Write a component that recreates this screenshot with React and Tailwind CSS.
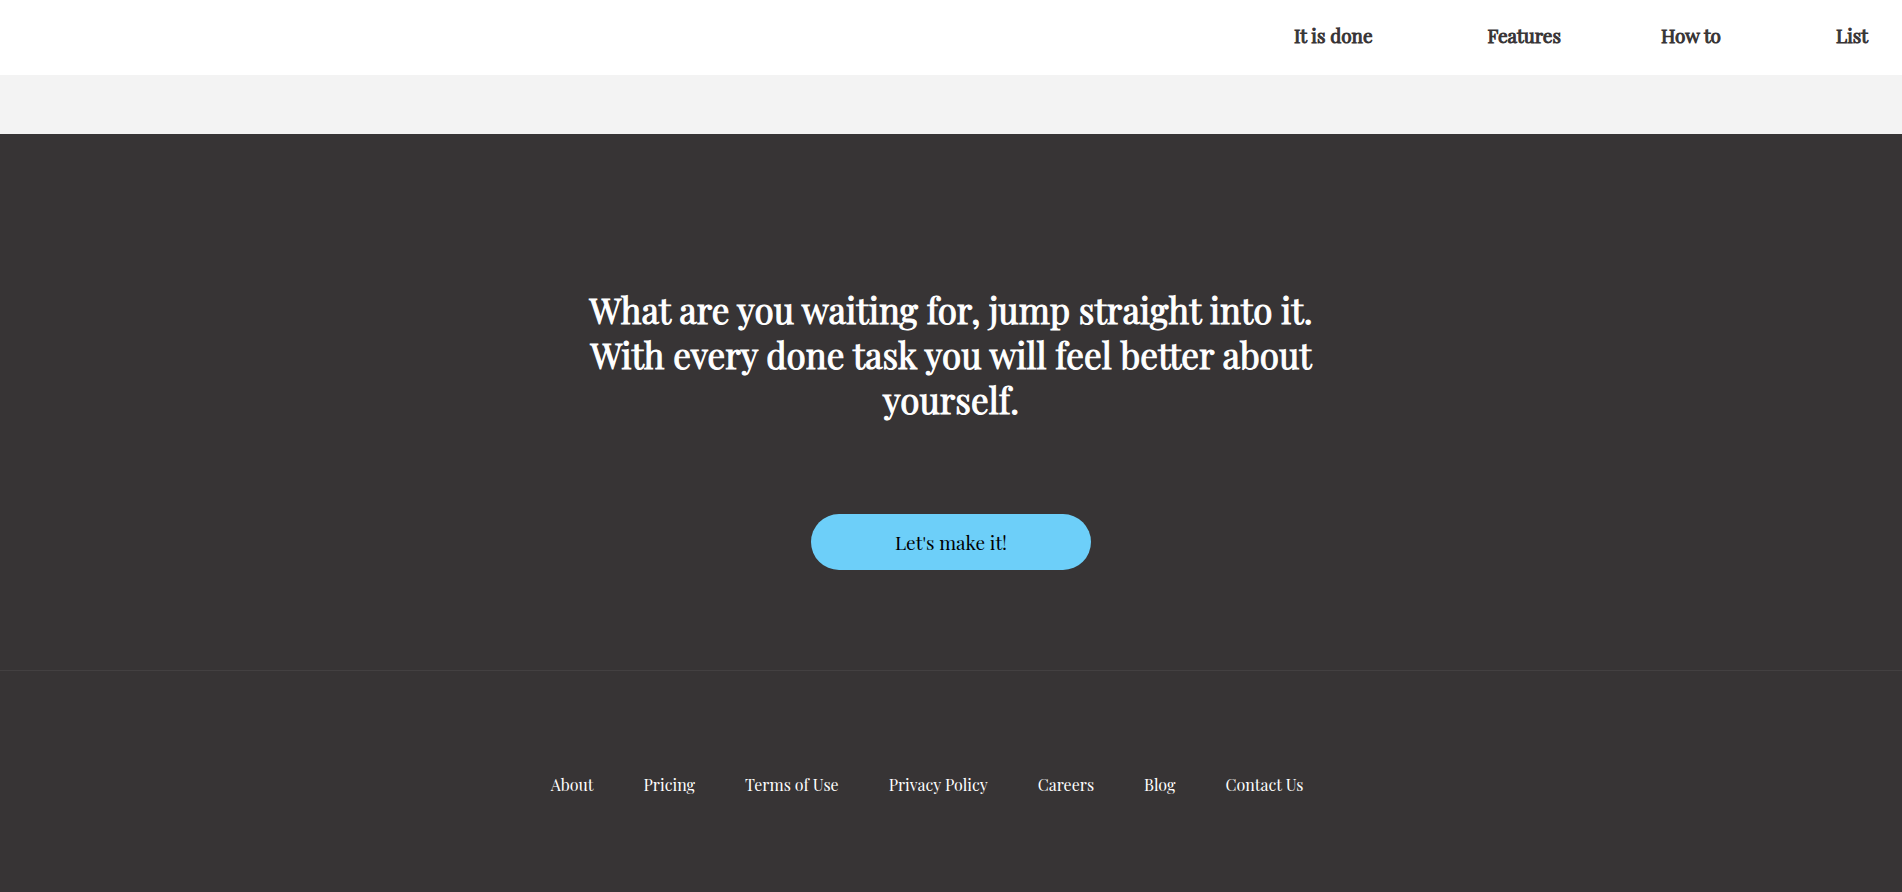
const navLinks = [
  { label: "It is done", gap: "mr-[115px]" },
  { label: "Features", gap: "mr-[100px]" },
  { label: "How to", gap: "mr-[115px]" },
  { label: "List", gap: "" },
];

const footerLinks = ["About", "Pricing", "Terms of Use", "Privacy Policy", "Careers", "Blog", "Contact Us"];

export default function App() {
  return (
    <div className="flex min-h-screen flex-col bg-[#373435] font-['Playfair_Display','Liberation_Serif',serif]">
      <header className="flex h-[75px] items-center justify-end bg-white px-[34px] pb-1">
        <nav className="flex text-[19px] text-[#373435] [-webkit-text-stroke:1px]">
          {navLinks.map((link) => (
            <a key={link.label} href="#" className={link.gap}>{link.label}</a>
          ))}
        </nav>
      </header>
      <div className="h-[59px] bg-[#f3f3f3]" />
      <section className="flex flex-col items-center border-b border-[#434041] pt-[153px] pb-[100px]">
        <h1 className="max-w-[750px] text-center text-[35px] leading-[45px] text-white [-webkit-text-stroke:1px]">
          What are you waiting for, jump straight into it. With every done task you will feel better about yourself.
        </h1>
        <button type="button" className="mt-[92px] h-14 w-[280px] rounded-full bg-[#6dcff9] text-[19px] text-black">
          Let's make it!
        </button>
      </section>
      <footer className="flex justify-center py-[102px] pr-12">
        <nav className="flex gap-[50px] text-base text-white">
          {footerLinks.map((label) => (
            <a key={label} href="#">{label}</a>
          ))}
        </nav>
      </footer>
    </div>
  );
}
